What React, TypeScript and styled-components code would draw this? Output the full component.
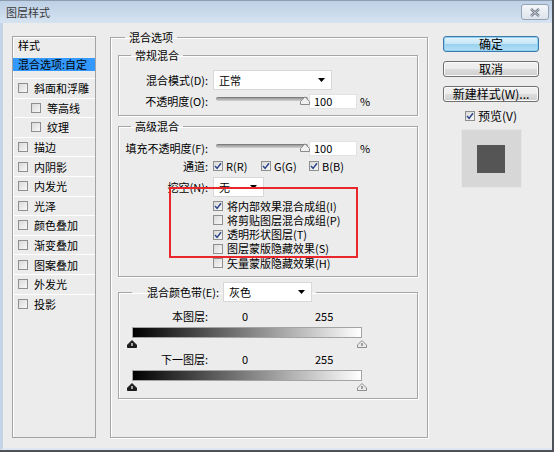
import React from "react";
import styled, { createGlobalStyle } from "styled-components";

const GlobalStyle = createGlobalStyle`
  html, body {
    margin: 0;
    padding: 0;
    background: #ffffff;
  }
  body {
    font-family: "Noto Sans CJK SC", "Liberation Sans", sans-serif;
    font-size: 11px;
    color: #000;
  }
  * {
    box-sizing: border-box;
  }
`;

const styleItems = [
  { label: "斜面和浮雕" },
  { label: "等高线", indent: true },
  { label: "纹理", indent: true },
  { label: "描边" },
  { label: "内阴影" },
  { label: "内发光" },
  { label: "光泽" },
  { label: "颜色叠加" },
  { label: "渐变叠加" },
  { label: "图案叠加" },
  { label: "外发光" },
  { label: "投影" },
];

const advancedOptions = [
  { label: "将内部效果混合成组(I)", checked: true },
  { label: "将剪贴图层混合成组(P)", checked: false },
  { label: "透明形状图层(T)", checked: true },
  { label: "图层蒙版隐藏效果(S)", checked: false },
  { label: "矢量蒙版隐藏效果(H)", checked: false },
];

const Check = ({ checked }: { checked?: boolean }) => (
  <CheckBox>
    {checked && (
      <svg width="8" height="8" viewBox="0 0 8 8">
        <path d="M1 4 L3.1 6.4 L7 1.2" fill="none" stroke="#2f4788" strokeWidth="1.5" />
      </svg>
    )}
  </CheckBox>
);

const Thumb = ({ dark }: { dark?: boolean }) => (
  <svg width="10" height="8" viewBox="0 0 10 8">
    <path
      d="M0.5 7.5 L0.5 5 L5 0.5 L9.5 5 L9.5 7.5 Z"
      fill={dark ? "#1c1c1c" : "#ececec"}
      stroke={dark ? "#1c1c1c" : "#8c8c8c"}
    />
    <path d="M5 3 L5 6" stroke={dark ? "#ffffff" : "#6a6a6a"} strokeWidth="1.2" />
  </svg>
);

const Slider = () => (
  <SliderWrap>
    <Track />
    <SliderKnob>
      <svg width="10" height="9" viewBox="0 0 10 9">
        <path d="M0.5 8.5 L0.5 5.5 L5 0.8 L9.5 5.5 L9.5 8.5 Z" fill="#efefef" stroke="#8a8a8a" />
      </svg>
    </SliderKnob>
  </SliderWrap>
);

const Select = ({ value, width }: { value: string; width: number }) => (
  <Dropdown $width={width}>
    <span>{value}</span>
    <svg width="7" height="4" viewBox="0 0 7 4">
      <path d="M0 0 L7 0 L3.5 4 Z" fill="#000" />
    </svg>
  </Dropdown>
);

export default function App() {
  return (
    <>
      <GlobalStyle />
      <Window>
        <TitleBar>
          <TitleText>图层样式</TitleText>
          <CloseButton>
            <svg width="12" height="9" viewBox="0 0 12 9">
              <path d="M2 1 L10 8 M10 1 L2 8" stroke="#6f7a86" strokeWidth="2.4" />
              <path d="M2 1 L10 8 M10 1 L2 8" stroke="#e9edf2" strokeWidth="0.7" />
            </svg>
          </CloseButton>
        </TitleBar>

        <Body>
          <StyleList>
            <ListHeader>样式</ListHeader>
            <SelectedItem>混合选项:自定</SelectedItem>
            {styleItems.map((item) => (
              <ListItem key={item.label} $indent={item.indent}>
                <Check />
                <span>{item.label}</span>
              </ListItem>
            ))}
          </StyleList>

          <MainGroup>
            <Legend $offset={7}>混合选项</Legend>

            <Group $pt={8} $pb={5}>
              <Legend $offset={12}>常规混合</Legend>
              <Row $h={20}>
                <Label>混合模式(D):</Label>
                <Select value="正常" width={119} />
              </Row>
              <Row $h={18} $mt={2}>
                <Label>不透明度(O):</Label>
                <Slider />
                <NumberInput>100</NumberInput>
                <Percent>%</Percent>
              </Row>
            </Group>

            <Group $pt={6} $pb={6} $mt={3}>
              <Legend $offset={12}>高级混合</Legend>
              <Row $h={18}>
                <Label>填充不透明度(F):</Label>
                <Slider />
                <NumberInput>100</NumberInput>
                <Percent>%</Percent>
              </Row>
              <Row $h={18}>
                <Label>通道:</Label>
                <Channels>
                  <Channel>
                    <Check checked />
                    <span>R(R)</span>
                  </Channel>
                  <Channel>
                    <Check checked />
                    <span>G(G)</span>
                  </Channel>
                  <Channel>
                    <Check checked />
                    <span>B(B)</span>
                  </Channel>
                </Channels>
              </Row>
              <Row $h={20} $mt={2}>
                <Label>挖空(N):</Label>
                <Select value="无" width={51} />
              </Row>
              <OptionList>
                {advancedOptions.map((opt) => (
                  <OptionRow key={opt.label}>
                    <Check checked={opt.checked} />
                    <span>{opt.label}</span>
                  </OptionRow>
                ))}
              </OptionList>
            </Group>

            <Group $pt={7} $pb={7} $mt={5}>
              <BandLegend>
                <BandLabel>混合颜色带(E):</BandLabel>
                <Select value="灰色" width={89} />
              </BandLegend>
              <Row $h={14}>
                <Label>本图层:</Label>
                <Value>0</Value>
                <span>255</span>
              </Row>
              <GradientBar />
              <ThumbRow>
                <Thumb dark />
                <Thumb />
              </ThumbRow>
              <Row $h={14} $mt={4}>
                <Label>下一图层:</Label>
                <Value>0</Value>
                <span>255</span>
              </Row>
              <GradientBar />
              <ThumbRow>
                <Thumb dark />
                <Thumb />
              </ThumbRow>
            </Group>
          </MainGroup>

          <SideColumn>
            <Button $primary>确定</Button>
            <Button>取消</Button>
            <Button>新建样式(W)...</Button>
            <PreviewToggle>
              <Check checked />
              <span>预览(V)</span>
            </PreviewToggle>
            <PreviewBox>
              <PreviewSwatch />
            </PreviewBox>
          </SideColumn>
        </Body>

        <Annotation />
      </Window>
    </>
  );
}

const Window = styled.div`
  position: relative;
  width: 554px;
  height: 452px;
  display: flex;
  flex-direction: column;
  background: #ececec;
  border-right: 2px solid #4d5258;
  border-bottom: 2px solid #4d5258;
`;

const TitleBar = styled.div`
  height: 23px;
  display: flex;
  align-items: center;
  justify-content: space-between;
  padding: 0 3px 0 6px;
  background: linear-gradient(#bdd0e6, #d6e3f1);
  border-top: 1px solid #8d9db0;
`;

const TitleText = styled.span`
  font-size: 11px;
  line-height: 14px;
  color: #3a3a3a;
`;

const CloseButton = styled.div`
  width: 28px;
  height: 16px;
  display: flex;
  align-items: center;
  justify-content: center;
  border: 1px solid #95a3b4;
  border-radius: 3px;
  background: linear-gradient(#f4f7fa, #dde4ec);
`;

const Body = styled.div`
  flex: 1;
  display: flex;
  align-items: flex-start;
  padding: 7px 0 0 9px;
  border-left: 3px solid #c4d3e5;
  border-bottom: 2px solid #dfe7f2;
`;

const StyleList = styled.div`
  width: 84px;
  height: 402px;
  margin-top: 6px;
  border: 1px solid #a3a3a3;
  box-shadow: inset 1px 1px 0 #ffffff;
  display: flex;
  flex-direction: column;
`;

const ListHeader = styled.div`
  height: 21px;
  padding-left: 5px;
  line-height: 16px;
`;

const SelectedItem = styled.div`
  height: 13px;
  margin-bottom: 7px;
  padding-left: 5px;
  line-height: 13px;
  background: #3399ff;
  color: #000;
  white-space: nowrap;
`;

const ListItem = styled.div<{ $indent?: boolean }>`
  height: 19.6px;
  display: flex;
  align-items: center;
  gap: 6px;
  padding-left: ${(p) => (p.$indent ? 18 : 5)}px;
  border-top: 1px solid #ffffff;
  white-space: nowrap;
  line-height: 14px;
`;

const CheckBox = styled.span`
  width: 10px;
  height: 10px;
  flex-shrink: 0;
  display: inline-flex;
  align-items: center;
  justify-content: center;
  border: 1px solid #8e8f8f;
  background: linear-gradient(135deg, #d9d9d9, #f8f8f8);
`;

const MainGroup = styled.fieldset`
  width: 318px;
  height: 408px;
  margin: 0 0 0 14px;
  padding: 4px 9px 0 7px;
  border: 1px solid #a6a6a6;
  box-shadow: inset 1px 1px 0 #ffffff, 1px 1px 0 #ffffff;
  min-width: 0;
`;

const Legend = styled.legend<{ $offset: number }>`
  margin-left: ${(p) => p.$offset}px;
  padding: 0 4px;
  height: 14px;
  line-height: 14px;
`;

const Group = styled.fieldset<{ $pt: number; $pb: number; $mt?: number }>`
  margin: ${(p) => p.$mt ?? 0}px 0 0 0;
  padding: ${(p) => p.$pt}px 0 ${(p) => p.$pb}px 0;
  border: 1px solid #a6a6a6;
  box-shadow: inset 1px 1px 0 #ffffff, 1px 1px 0 #ffffff;
  min-width: 0;
`;

const Row = styled.div<{ $h: number; $mt?: number }>`
  height: ${(p) => p.$h}px;
  margin-top: ${(p) => p.$mt ?? 0}px;
  display: flex;
  align-items: center;
  white-space: nowrap;
  line-height: 14px;
`;

const Label = styled.span`
  width: 89px;
  margin-right: 5px;
  text-align: right;
  flex-shrink: 0;
`;

const Dropdown = styled.div<{ $width: number }>`
  width: ${(p) => p.$width}px;
  height: 20px;
  display: flex;
  align-items: center;
  justify-content: space-between;
  padding: 0 6px 0 5px;
  background: #ffffff;
  border: 1px solid #d8d8d8;
  line-height: 14px;
`;

const SliderWrap = styled.div`
  position: relative;
  width: 94px;
  height: 12px;
  margin-left: 3px;
  display: flex;
  align-items: flex-start;
`;

const Track = styled.div`
  width: 92px;
  height: 4px;
  margin-top: 2px;
  border-radius: 2px;
  border-top: 1px solid #7d7d7d;
  background: linear-gradient(#9a9a9a, #d2d2d2);
`;

const SliderKnob = styled.div`
  position: absolute;
  left: 84px;
  top: 1px;
  line-height: 0;
`;

const NumberInput = styled.div`
  width: 48px;
  height: 15px;
  margin-left: -1px;
  padding-left: 4px;
  background: #ffffff;
  border: 1px solid #e2e2e2;
  line-height: 13px;
`;

const Percent = styled.span`
  margin-left: 3px;
`;

const Channels = styled.div`
  display: flex;
  align-items: center;
`;

const Channel = styled.div`
  width: 48px;
  display: flex;
  align-items: center;
  gap: 3px;
`;

const OptionList = styled.div`
  margin-top: 2px;
  padding-left: 94px;
  display: flex;
  flex-direction: column;
`;

const OptionRow = styled.div`
  height: 14.25px;
  display: flex;
  align-items: center;
  gap: 4px;
  white-space: nowrap;
  line-height: 13px;
`;

const BandLegend = styled.legend`
  margin-left: 13px;
  padding: 0 4px;
  height: 20px;
  display: flex;
  align-items: center;
  gap: 4px;
`;

const BandLabel = styled.span`
  width: 83px;
  text-align: right;
  white-space: nowrap;
`;

const Value = styled.span`
  width: 102px;
  padding-left: 29px;
`;

const GradientBar = styled.div`
  width: 230px;
  height: 11px;
  margin: 4px 0 0 13px;
  border: 1px solid #a4a4a4;
  background: linear-gradient(to right, #000000, #ffffff);
`;

const ThumbRow = styled.div`
  width: 240px;
  height: 8px;
  margin: 2px 0 0 8px;
  display: flex;
  justify-content: space-between;
  line-height: 0;
`;

const SideColumn = styled.div`
  width: 96px;
  margin: 6px 0 0 15px;
  display: flex;
  flex-direction: column;
  align-items: center;
  gap: 9px;
`;

const Button = styled.div<{ $primary?: boolean }>`
  width: 96px;
  height: 16px;
  display: flex;
  align-items: center;
  justify-content: center;
  line-height: 14px;
  font-size: 12px;
  border-radius: 3px;
  border: 1px solid ${(p) => (p.$primary ? "#3d7bad" : "#707070")};
  background: ${(p) =>
    p.$primary
      ? "linear-gradient(#e5f4fc 0%, #c4e5f6 50%, #98d1ef 51%, #b7e0f5 100%)"
      : "linear-gradient(#f2f2f2 0%, #ebebeb 50%, #dddddd 51%, #cfcfcf 100%)"};
  box-shadow: inset 0 0 0 1px ${(p) => (p.$primary ? "#8ed0f2" : "#fbfbfb")};
  white-space: nowrap;
`;

const PreviewToggle = styled.div`
  height: 14px;
  margin-top: -2px;
  display: flex;
  align-items: center;
  gap: 3px;
  line-height: 14px;
  font-size: 12px;
`;

const PreviewBox = styled.div`
  width: 61px;
  height: 59px;
  margin-top: -3px;
  display: flex;
  align-items: center;
  justify-content: center;
  background: #d7d7d7;
  border: 1px solid #e6e6e6;
`;

const PreviewSwatch = styled.div`
  width: 28px;
  height: 28px;
  background: #555555;
`;

const Annotation = styled.div`
  position: absolute;
  left: 169px;
  top: 187px;
  width: 189px;
  height: 71px;
  border: 2px solid #e8262c;
  pointer-events: none;
`;
